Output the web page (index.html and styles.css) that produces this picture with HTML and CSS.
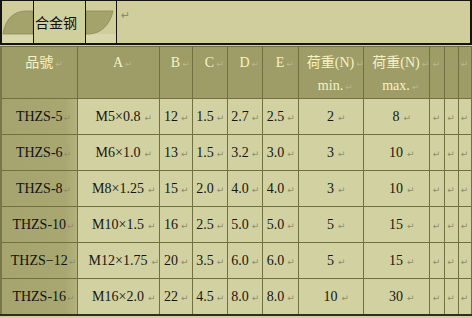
FILE: index.html
```html
<!DOCTYPE html>
<html>
<head>
<meta charset="utf-8">
<link rel="stylesheet" href="styles.css">
</head>
<body>
<div class="frame">
  <div class="leaf leaf-left">
    <svg width="31" height="42" viewBox="0 0 31 42">
      <rect x="0" y="33" width="31" height="9" fill="#d9d8ad"/>
      <path d="M1,33 C3,19 11,10 24,10 L31,10 L31,33 Z" fill="#a4a36c" stroke="#8d8c58" stroke-width="0.8"/>
    </svg>
  </div>
  <div class="tab">合金钢</div>
  <div class="leaf leaf-right">
    <svg width="30" height="42" viewBox="0 0 30 42">
      <rect x="0" y="33" width="30" height="9" fill="#d9d8ad"/>
      <path d="M0,10 L27,10 C24,24 15,32 4,33 L0,33 Z" fill="#a4a36c" stroke="#8d8c58" stroke-width="0.8"/>
    </svg>
  </div>
  <span class="mk mk-top">↵</span>
</div>
<table class="spec">
  <colgroup>
    <col style="width:76px"><col style="width:82px"><col style="width:33px"><col style="width:35px"><col style="width:35px"><col style="width:36px"><col style="width:65px"><col style="width:66px"><col style="width:15px"><col style="width:14px"><col style="width:13px">
  </colgroup>
  <thead>
    <tr>
      <th>品號<span class="mk">↵</span></th>
      <th>A<span class="mk">↵</span></th>
      <th>B<span class="mk">↵</span></th>
      <th>C<span class="mk">↵</span></th>
      <th>D<span class="mk">↵</span></th>
      <th>E<span class="mk">↵</span></th>
      <th>荷重(N)<span class="mk">↵</span><br>min.<span class="mk">↵</span></th>
      <th>荷重(N)<span class="mk">↵</span><br>max.<span class="mk">↵</span></th>
      <th class="e"><span class="mk">↵</span></th>
      <th class="e"></th>
      <th class="e"><span class="mk">↵</span></th>
    </tr>
  </thead>
  <tbody>
    <tr><td class="pn">THZS-5<span class="mk">↵</span></td><td>M5×0.8<span class="mk">↵</span></td><td class="n">12<span class="mk">↵</span></td><td class="n">1.5<span class="mk">↵</span></td><td class="n">2.7<span class="mk">↵</span></td><td class="n">2.5<span class="mk">↵</span></td><td>2<span class="mk">↵</span></td><td>8<span class="mk">↵</span></td><td class="e"><span class="mk">↵</span></td><td class="e"><span class="mk">↵</span></td><td class="e"><span class="mk">↵</span></td></tr>
    <tr><td class="pn">THZS-6<span class="mk">↵</span></td><td>M6×1.0<span class="mk">↵</span></td><td class="n">13<span class="mk">↵</span></td><td class="n">1.5<span class="mk">↵</span></td><td class="n">3.2<span class="mk">↵</span></td><td class="n">3.0<span class="mk">↵</span></td><td>3<span class="mk">↵</span></td><td>10<span class="mk">↵</span></td><td class="e"><span class="mk">↵</span></td><td class="e"><span class="mk">↵</span></td><td class="e"><span class="mk">↵</span></td></tr>
    <tr><td class="pn">THZS-8<span class="mk">↵</span></td><td>M8×1.25<span class="mk">↵</span></td><td class="n">15<span class="mk">↵</span></td><td class="n">2.0<span class="mk">↵</span></td><td class="n">4.0<span class="mk">↵</span></td><td class="n">4.0<span class="mk">↵</span></td><td>3<span class="mk">↵</span></td><td>10<span class="mk">↵</span></td><td class="e"><span class="mk">↵</span></td><td class="e"><span class="mk">↵</span></td><td class="e"><span class="mk">↵</span></td></tr>
    <tr><td class="pn">THZS-10<span class="mk">↵</span></td><td>M10×1.5<span class="mk">↵</span></td><td class="n">16<span class="mk">↵</span></td><td class="n">2.5<span class="mk">↵</span></td><td class="n">5.0<span class="mk">↵</span></td><td class="n">5.0<span class="mk">↵</span></td><td>5<span class="mk">↵</span></td><td>15<span class="mk">↵</span></td><td class="e"><span class="mk">↵</span></td><td class="e"><span class="mk">↵</span></td><td class="e"><span class="mk">↵</span></td></tr>
    <tr><td class="pn">THZS−12<span class="mk">↵</span></td><td>M12×1.75<span class="mk">↵</span></td><td class="n">20<span class="mk">↵</span></td><td class="n">3.5<span class="mk">↵</span></td><td class="n">6.0<span class="mk">↵</span></td><td class="n">6.0<span class="mk">↵</span></td><td>5<span class="mk">↵</span></td><td>15<span class="mk">↵</span></td><td class="e"><span class="mk">↵</span></td><td class="e"><span class="mk">↵</span></td><td class="e"><span class="mk">↵</span></td></tr>
    <tr><td class="pn">THZS-16<span class="mk">↵</span></td><td>M16×2.0<span class="mk">↵</span></td><td class="n">22<span class="mk">↵</span></td><td class="n">4.5<span class="mk">↵</span></td><td class="n">8.0<span class="mk">↵</span></td><td class="n">8.0<span class="mk">↵</span></td><td>10<span class="mk">↵</span></td><td>30<span class="mk">↵</span></td><td class="e"><span class="mk">↵</span></td><td class="e"><span class="mk">↵</span></td><td class="e"><span class="mk">↵</span></td></tr>
  </tbody>
</table>
</body>
</html>
```

FILE: styles.css
```css
html, body {
  margin: 0;
  padding: 0;
  background: #d1d09f;
}
body {
  width: 472px;
  height: 318px;
  overflow: hidden;
  font-family: "Liberation Serif", "Noto Sans CJK SC", serif;
}
.frame {
  box-sizing: border-box;
  width: 472px;
  height: 45px;
  border: 2px solid #151510;
  border-top-width: 1px;
  background: #cfce9c;
  display: flex;
  align-items: stretch;
  position: relative;
}
.leaf {
  display: flex;
  align-items: flex-start;
  overflow: hidden;
}
.leaf svg { display: block; }
.leaf-left { width: 31px; }
.leaf-right {
  width: 30px;
  border-right: 1.5px solid #151510;
}
.tab {
  box-sizing: border-box;
  width: 53px;
  border-left: 1.5px solid #151510;
  border-right: 1.5px solid #151510;
  font-family: "Noto Sans CJK SC", sans-serif;
  font-size: 14px;
  color: #111;
  padding: 11px 0 0 1px;
  line-height: 20px;
  background: #d0cf9e;
}
.mk {
  display: inline-block;
  width: 8px;
  font-family: "DejaVu Sans", sans-serif;
  font-size: 9px;
  color: #8e8d6e;
  margin-left: 4px;
  margin-right: -12px;
  text-align: left;
}
.mk-top {
  margin: 8px 0 0 4px;
  width: auto;
  font-size: 11px;
  color: #8a8a74;
}
.spec {
  margin-top: 1px;
  width: 471px;
  table-layout: fixed;
  border-collapse: collapse;
  border-left: 2px solid #77774a;
  border-bottom: 2px solid #2e2e22;
  font-size: 14px;
}
.spec th, .spec td {
  border: 1px solid #707040;
  padding: 0;
  text-align: center;
  white-space: nowrap;
  overflow: visible;
}
.spec th {
  height: 46px;
  background: #9e9d68;
  color: #f6f2c4;
  font-weight: normal;
  vertical-align: top;
  padding-top: 5px;
  line-height: 21px;
}
.spec th .mk {
  color: #b9b78c;
  margin-left: 2px;
  margin-right: -10px;
}
.spec td.pn .mk {
  margin-left: 1px;
  margin-right: -9px;
}
.spec td.n .mk {
  width: 6px;
  margin-left: 3px;
  margin-right: 0;
}
.spec td {
  height: 35px;
  background: #d2d1a1;
  color: #161610;
  vertical-align: middle;
}
.spec td.pn {
  background: linear-gradient(to right, #a5a46f 0%, #a8a772 85%, #b3b27e 100%);
  color: #121210;
}
.spec td.e .mk, .spec th.e .mk {
  margin: 0;
  width: auto;
}
```
